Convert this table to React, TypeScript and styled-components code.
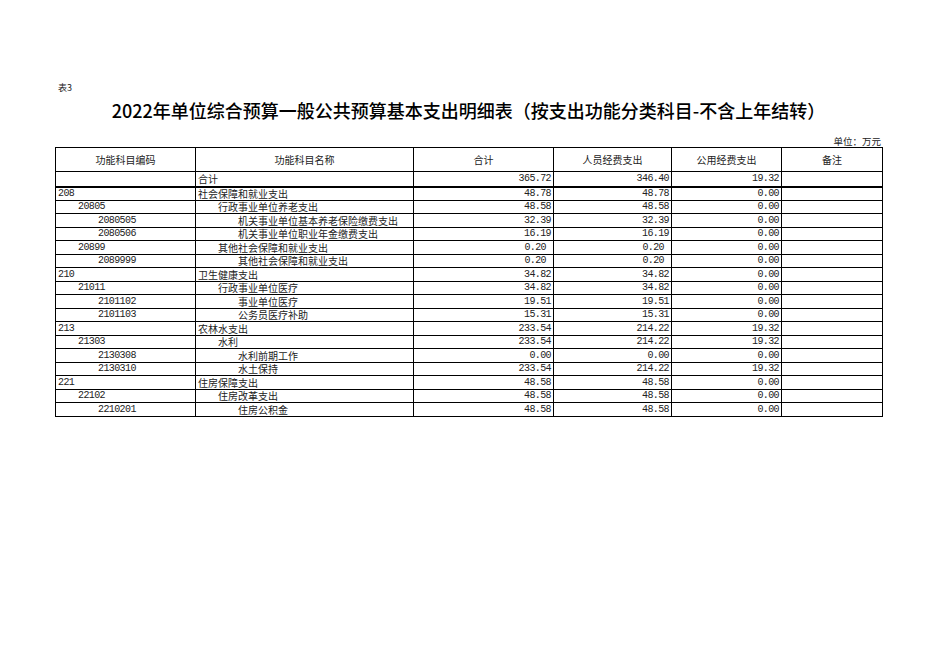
import styled, { createGlobalStyle } from "styled-components";

const GlobalStyle = createGlobalStyle`
  body {
    margin: 0;
    background: #fff;
    font-family: "Noto Sans CJK SC", "Liberation Serif", serif;
    color: #111;
  }
`;

const Page = styled.div`
  width: 936px;
  height: 662px;
  padding: 82px 0 0 55px;
  box-sizing: border-box;
  display: flex;
  flex-direction: column;
`;

const Sheet = styled.div`
  width: 827px;
  display: flex;
  flex-direction: column;
`;

const TableNo = styled.div`
  font-size: 9px;
  line-height: 12px;
  padding-left: 3px;
  color: #222;
`;

const Title = styled.h1`
  margin: 4px 0 0;
  font-size: 18px;
  line-height: 24px;
  font-weight: 500;
  text-align: center;
  color: #000;
`;

const Unit = styled.div`
  margin-top: 13px;
  font-size: 9.5px;
  line-height: 12px;
  text-align: right;
  padding-right: 1px;
  color: #222;
`;

const Table = styled.table`
  border-collapse: collapse;
  table-layout: fixed;
  width: 827px;
  font-size: 10px;
  color: #222;
`;

const Col = styled.col<{ $w: number }>`
  width: ${p => p.$w}px;
`;

const HeadCell = styled.th`
  height: 23px;
  padding: 0;
  border: 1px solid #000;
  font-weight: 400;
  font-size: 10px;
  text-align: center;
  vertical-align: middle;
`;

const Row = styled.tr<{ $total?: boolean }>`
  height: ${p => (p.$total ? "15px" : "13.5px")};
  & > td {
    border-bottom: ${p => (p.$total ? "2px" : "1px")} solid #000;
  }
`;

const Cell = styled.td<{ $indent?: number }>`
  padding: 0 0 0 ${p => 2 + (p.$indent ?? 0) * 20}px;
  border-left: 1px solid #000;
  border-right: 1px solid #000;
  line-height: 11px;
  white-space: nowrap;
  overflow: hidden;
  vertical-align: middle;
`;

const CodeCell = styled(Cell)`
  font-family: "Liberation Mono", monospace;
  letter-spacing: -0.6px;
`;

const NumCell = styled.td<{ $loose?: boolean }>`
  padding: 0 ${p => (p.$loose ? 7 : 2)}px 0 0;
  border-left: 1px solid #000;
  border-right: 1px solid #000;
  line-height: 11px;
  text-align: right;
  font-family: "Liberation Mono", monospace;
  letter-spacing: -0.6px;
  vertical-align: middle;
`;

const NoteCell = styled.td`
  padding: 0;
  border-left: 1px solid #000;
  border-right: 1px solid #000;
`;

type Item = {
  code: string;
  level: number;
  name: string;
  total: string;
  staff: string;
  office: string;
};

const items: Item[] = [
  { code: "208", level: 0, name: "社会保障和就业支出", total: "48.78", staff: "48.78", office: "0.00" },
  { code: "20805", level: 1, name: "行政事业单位养老支出", total: "48.58", staff: "48.58", office: "0.00" },
  { code: "2080505", level: 2, name: "机关事业单位基本养老保险缴费支出", total: "32.39", staff: "32.39", office: "0.00" },
  { code: "2080506", level: 2, name: "机关事业单位职业年金缴费支出", total: "16.19", staff: "16.19", office: "0.00" },
  { code: "20899", level: 1, name: "其他社会保障和就业支出", total: "0.20", staff: "0.20", office: "0.00" },
  { code: "2089999", level: 2, name: "其他社会保障和就业支出", total: "0.20", staff: "0.20", office: "0.00" },
  { code: "210", level: 0, name: "卫生健康支出", total: "34.82", staff: "34.82", office: "0.00" },
  { code: "21011", level: 1, name: "行政事业单位医疗", total: "34.82", staff: "34.82", office: "0.00" },
  { code: "2101102", level: 2, name: "事业单位医疗", total: "19.51", staff: "19.51", office: "0.00" },
  { code: "2101103", level: 2, name: "公务员医疗补助", total: "15.31", staff: "15.31", office: "0.00" },
  { code: "213", level: 0, name: "农林水支出", total: "233.54", staff: "214.22", office: "19.32" },
  { code: "21303", level: 1, name: "水利", total: "233.54", staff: "214.22", office: "19.32" },
  { code: "2130308", level: 2, name: "水利前期工作", total: "0.00", staff: "0.00", office: "0.00" },
  { code: "2130310", level: 2, name: "水土保持", total: "233.54", staff: "214.22", office: "19.32" },
  { code: "221", level: 0, name: "住房保障支出", total: "48.58", staff: "48.58", office: "0.00" },
  { code: "22102", level: 1, name: "住房改革支出", total: "48.58", staff: "48.58", office: "0.00" },
  { code: "2210201", level: 2, name: "住房公积金", total: "48.58", staff: "48.58", office: "0.00" },
];

const columns = [
  { label: "功能科目编码", w: 140 },
  { label: "功能科目名称", w: 218 },
  { label: "合计", w: 140 },
  { label: "人员经费支出", w: 118 },
  { label: "公用经费支出", w: 110 },
  { label: "备注", w: 101 },
];

export default function App() {
  return (
    <>
      <GlobalStyle />
      <Page>
        <Sheet>
          <TableNo>表3</TableNo>
          <Title>2022年单位综合预算一般公共预算基本支出明细表（按支出功能分类科目-不含上年结转）</Title>
          <Unit>单位：万元</Unit>
          <Table>
            <colgroup>
              {columns.map(c => (
                <Col key={c.label} $w={c.w} />
              ))}
            </colgroup>
            <thead>
              <tr>
                {columns.map(c => (
                  <HeadCell key={c.label}>{c.label}</HeadCell>
                ))}
              </tr>
            </thead>
            <tbody>
              <Row $total>
                <CodeCell />
                <Cell>合计</Cell>
                <NumCell>365.72</NumCell>
                <NumCell>346.40</NumCell>
                <NumCell>19.32</NumCell>
                <NoteCell />
              </Row>
              {items.map((it, i) => (
                <Row key={i}>
                  <CodeCell $indent={it.level}>{it.code}</CodeCell>
                  <Cell $indent={it.level}>{it.name}</Cell>
                  <NumCell $loose={it.total === "0.20"}>{it.total}</NumCell>
                  <NumCell $loose={it.staff === "0.20"}>{it.staff}</NumCell>
                  <NumCell>{it.office}</NumCell>
                  <NoteCell />
                </Row>
              ))}
            </tbody>
          </Table>
        </Sheet>
      </Page>
    </>
  );
}
